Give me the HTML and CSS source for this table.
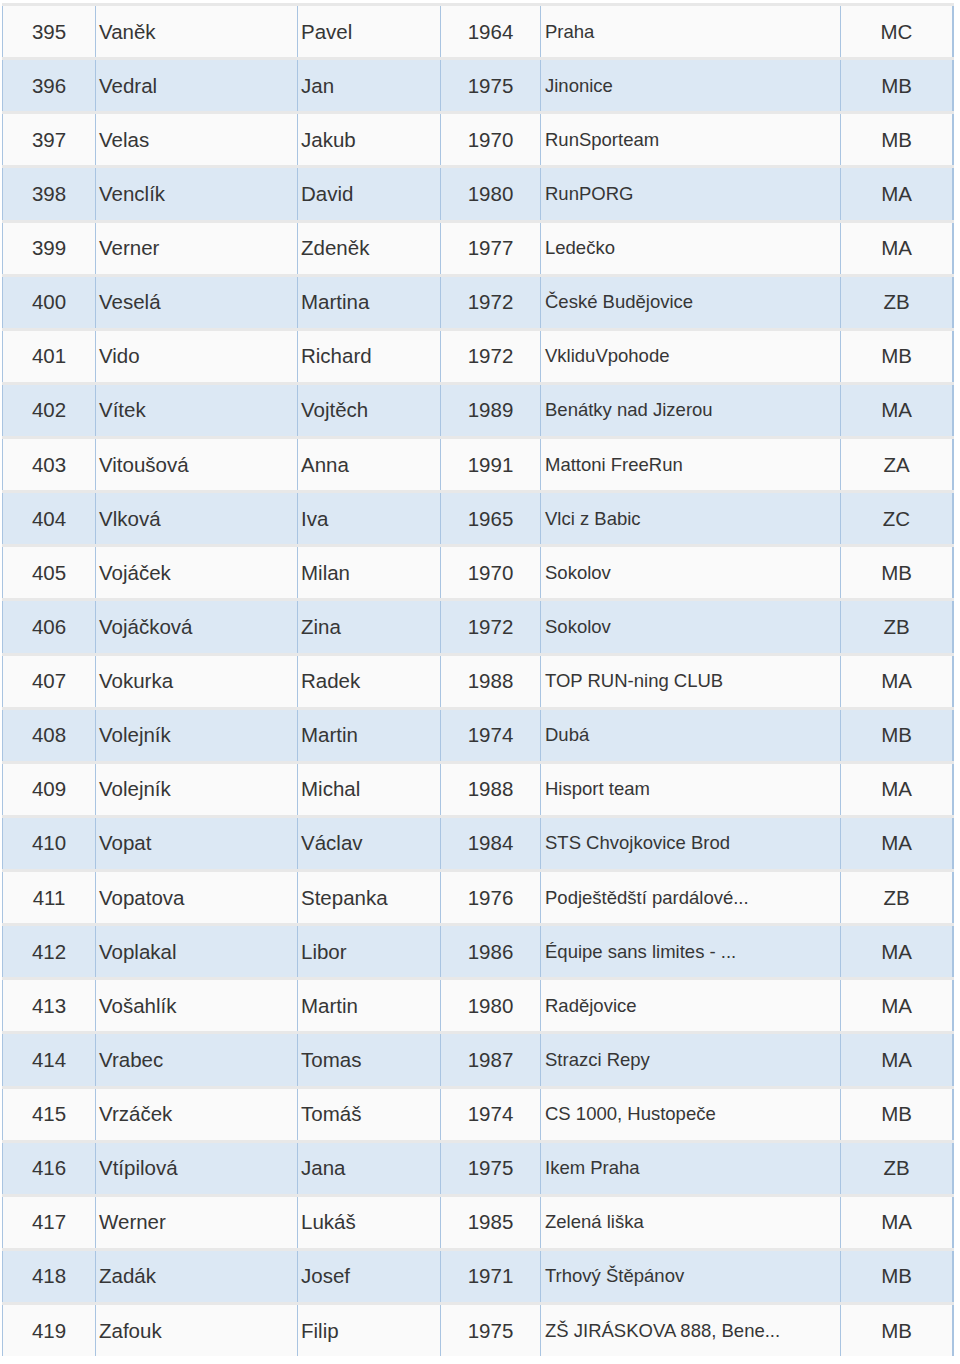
FILE: index.html
```html
<!DOCTYPE html>
<html lang="cs">
<head>
<meta charset="utf-8">
<title>Startovní listina</title>
<link rel="stylesheet" href="styles.css">
</head>
<body>
<div class="list">
  <div class="row"><div class="c num">395</div><div class="c">Vaněk</div><div class="c">Pavel</div><div class="c yr">1964</div><div class="c club">Praha</div><div class="c cat">MC</div></div>
  <div class="row alt"><div class="c num">396</div><div class="c">Vedral</div><div class="c">Jan</div><div class="c yr">1975</div><div class="c club">Jinonice</div><div class="c cat">MB</div></div>
  <div class="row"><div class="c num">397</div><div class="c">Velas</div><div class="c">Jakub</div><div class="c yr">1970</div><div class="c club">RunSporteam</div><div class="c cat">MB</div></div>
  <div class="row alt"><div class="c num">398</div><div class="c">Venclík</div><div class="c">David</div><div class="c yr">1980</div><div class="c club">RunPORG</div><div class="c cat">MA</div></div>
  <div class="row"><div class="c num">399</div><div class="c">Verner</div><div class="c">Zdeněk</div><div class="c yr">1977</div><div class="c club">Ledečko</div><div class="c cat">MA</div></div>
  <div class="row alt"><div class="c num">400</div><div class="c">Veselá</div><div class="c">Martina</div><div class="c yr">1972</div><div class="c club">České Budějovice</div><div class="c cat">ZB</div></div>
  <div class="row"><div class="c num">401</div><div class="c">Vido</div><div class="c">Richard</div><div class="c yr">1972</div><div class="c club">VkliduVpohode</div><div class="c cat">MB</div></div>
  <div class="row alt"><div class="c num">402</div><div class="c">Vítek</div><div class="c">Vojtěch</div><div class="c yr">1989</div><div class="c club">Benátky nad Jizerou</div><div class="c cat">MA</div></div>
  <div class="row"><div class="c num">403</div><div class="c">Vitoušová</div><div class="c">Anna</div><div class="c yr">1991</div><div class="c club">Mattoni FreeRun</div><div class="c cat">ZA</div></div>
  <div class="row alt"><div class="c num">404</div><div class="c">Vlková</div><div class="c">Iva</div><div class="c yr">1965</div><div class="c club">Vlci z Babic</div><div class="c cat">ZC</div></div>
  <div class="row"><div class="c num">405</div><div class="c">Vojáček</div><div class="c">Milan</div><div class="c yr">1970</div><div class="c club">Sokolov</div><div class="c cat">MB</div></div>
  <div class="row alt"><div class="c num">406</div><div class="c">Vojáčková</div><div class="c">Zina</div><div class="c yr">1972</div><div class="c club">Sokolov</div><div class="c cat">ZB</div></div>
  <div class="row"><div class="c num">407</div><div class="c">Vokurka</div><div class="c">Radek</div><div class="c yr">1988</div><div class="c club">TOP RUN-ning CLUB</div><div class="c cat">MA</div></div>
  <div class="row alt"><div class="c num">408</div><div class="c">Volejník</div><div class="c">Martin</div><div class="c yr">1974</div><div class="c club">Dubá</div><div class="c cat">MB</div></div>
  <div class="row"><div class="c num">409</div><div class="c">Volejník</div><div class="c">Michal</div><div class="c yr">1988</div><div class="c club">Hisport team</div><div class="c cat">MA</div></div>
  <div class="row alt"><div class="c num">410</div><div class="c">Vopat</div><div class="c">Václav</div><div class="c yr">1984</div><div class="c club">STS Chvojkovice Brod</div><div class="c cat">MA</div></div>
  <div class="row"><div class="c num">411</div><div class="c">Vopatova</div><div class="c">Stepanka</div><div class="c yr">1976</div><div class="c club">Podještědští pardálové...</div><div class="c cat">ZB</div></div>
  <div class="row alt"><div class="c num">412</div><div class="c">Voplakal</div><div class="c">Libor</div><div class="c yr">1986</div><div class="c club">Équipe sans limites - ...</div><div class="c cat">MA</div></div>
  <div class="row"><div class="c num">413</div><div class="c">Vošahlík</div><div class="c">Martin</div><div class="c yr">1980</div><div class="c club">Radějovice</div><div class="c cat">MA</div></div>
  <div class="row alt"><div class="c num">414</div><div class="c">Vrabec</div><div class="c">Tomas</div><div class="c yr">1987</div><div class="c club">Strazci Repy</div><div class="c cat">MA</div></div>
  <div class="row"><div class="c num">415</div><div class="c">Vrzáček</div><div class="c">Tomáš</div><div class="c yr">1974</div><div class="c club">CS 1000, Hustopeče</div><div class="c cat">MB</div></div>
  <div class="row alt"><div class="c num">416</div><div class="c">Vtípilová</div><div class="c">Jana</div><div class="c yr">1975</div><div class="c club">Ikem Praha</div><div class="c cat">ZB</div></div>
  <div class="row"><div class="c num">417</div><div class="c">Werner</div><div class="c">Lukáš</div><div class="c yr">1985</div><div class="c club">Zelená liška</div><div class="c cat">MA</div></div>
  <div class="row alt"><div class="c num">418</div><div class="c">Zadák</div><div class="c">Josef</div><div class="c yr">1971</div><div class="c club">Trhový Štěpánov</div><div class="c cat">MB</div></div>
  <div class="row"><div class="c num">419</div><div class="c">Zafouk</div><div class="c">Filip</div><div class="c yr">1975</div><div class="c club">ZŠ JIRÁSKOVA 888, Bene...</div><div class="c cat">MB</div></div>
</div>
</body>
</html>
```

FILE: styles.css
```css
html, body {
  margin: 0;
  padding: 0;
  background: #ffffff;
}

body {
  font-family: "Liberation Sans", Arial, sans-serif;
  color: #363636;
}

.list {
  display: flex;
  flex-direction: column;
  width: 952px;
  margin-left: 2px;
  padding-top: 3px;
}

.row {
  display: grid;
  grid-template-columns: 93px 202px 143px 100px 300px 114px;
  height: 54.125px;
  box-sizing: border-box;
  border-top: 3px solid #e8e8e8;
  background: #fafafa;
}

.row.alt {
  background: #dce8f4;
}

.c {
  display: flex;
  align-items: center;
  padding-left: 3px;
  font-size: 20.5px;
  border-left: 1px solid #a9c4e1;
  white-space: nowrap;
  overflow: hidden;
}

.c.cat {
  border-right: 2px solid #a9c4e1;
  justify-content: center;
  padding-left: 0;
}

.c.num,
.c.yr {
  justify-content: center;
  padding-left: 0;
}

.c.club {
  font-size: 18.5px;
  padding-left: 4px;
}
```
